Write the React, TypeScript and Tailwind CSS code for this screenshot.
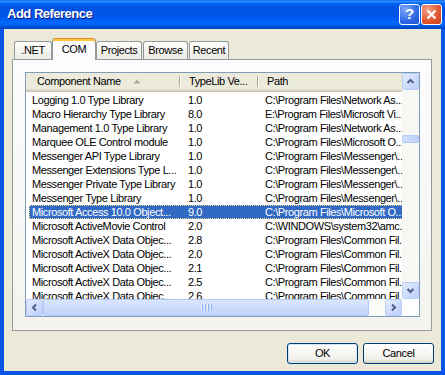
import React from "react";

const rows: [string, string, string][] = [
  ["Logging 1.0 Type Library", "1.0", "C:\\Program Files\\Network As..."],
  ["Macro Hierarchy Type Library", "8.0", "E:\\Program Files\\Microsoft Vi..."],
  ["Management 1.0 Type Library", "1.0", "C:\\Program Files\\Network As..."],
  ["Marquee OLE Control module", "1.0", "C:\\Program Files\\Microsoft O..."],
  ["Messenger API Type Library", "1.0", "C:\\Program Files\\Messenger\\..."],
  ["Messenger Extensions Type L...", "1.0", "C:\\Program Files\\Messenger\\..."],
  ["Messenger Private Type Library", "1.0", "C:\\Program Files\\Messenger\\..."],
  ["Messenger Type Library", "1.0", "C:\\Program Files\\Messenger\\..."],
  ["Microsoft Access 10.0 Object...", "9.0", "C:\\Program Files\\Microsoft O..."],
  ["Microsoft ActiveMovie Control", "2.0", "C:\\WINDOWS\\system32\\amc..."],
  ["Microsoft ActiveX Data Objec...", "2.8", "C:\\Program Files\\Common Fil..."],
  ["Microsoft ActiveX Data Objec...", "2.0", "C:\\Program Files\\Common Fil..."],
  ["Microsoft ActiveX Data Objec...", "2.1", "C:\\Program Files\\Common Fil..."],
  ["Microsoft ActiveX Data Objec...", "2.5", "C:\\Program Files\\Common Fil..."],
  ["Microsoft ActiveX Data Objec...", "2.6", "C:\\Program Files\\Common Fil..."],
];

const SELECTED = 8;

function Chevron({ dir }: { dir: "up" | "down" | "left" | "right" }) {
  const d = {
    up: "M1.5 6 L4.5 3 L7.5 6",
    down: "M1.5 3 L4.5 6 L7.5 3",
    left: "M6 1.5 L3 4.5 L6 7.5",
    right: "M3 1.5 L6 4.5 L3 7.5",
  }[dir];
  return (
    <svg width="9" height="9" viewBox="0 0 9 9">
      <path d={d} fill="none" stroke="#4d6185" strokeWidth="2" />
    </svg>
  );
}

function ScrollBtn({ dir }: { dir: "up" | "down" | "left" | "right" }) {
  return (
    <div className="flex h-[17px] w-[17px] shrink-0 items-center justify-center rounded-[2px] border border-[#b9cdf7] bg-[linear-gradient(135deg,#e3ecfe,#bccffb)]">
      <Chevron dir={dir} />
    </div>
  );
}

function Tab({ label, width, active, className = "" }: { label: string; width: string; active?: boolean; className?: string }) {
  if (active) {
    return (
      <div
        className={`relative z-10 -mb-px flex h-[22px] ${width} items-start justify-center rounded-t-[3px] border border-b-0 border-[#919b9c] border-t-[#e68b2c] bg-[#fcfcfe] pt-[2px] shadow-[inset_0_2px_#ffc83c] ${className}`}
      >
        {label}
      </div>
    );
  }
  return (
    <div
      className={`flex h-[18px] ${width} items-center justify-center rounded-t-[3px] border border-b-0 border-[#919b9c] bg-[linear-gradient(to_bottom,#ffffff,#f3f2ee_60%,#ecebe6)] ${className}`}
    >
      {label}
    </div>
  );
}

export default function App() {
  return (
    <div className="flex h-[375px] w-[445px] flex-col bg-[#0855e6] font-['Liberation_Sans',Arial,sans-serif] text-[11px] tracking-[-0.4px] text-black">
      {/* title bar */}
      <div className="flex h-[29px] shrink-0 items-center bg-[linear-gradient(to_bottom,#0058ee_0%,#3a93ff_4%,#288eff_6%,#127dff_8%,#036ffc_10%,#0262ee_14%,#0057e5_20%,#0054e3_24%,#0055eb_56%,#005bf5_66%,#026afe_76%,#0062ef_86%,#0052d6_92%,#0046c0_100%)] pl-[7px] pr-[3px]">
        <span className="flex-1 pb-[1px] text-[13px] font-bold tracking-[-0.5px] text-white [text-shadow:1px_1px_#0a1883]">
          Add Reference
        </span>
        <div className="flex h-[21px] w-[21px] items-center justify-center rounded-[3px] border border-white bg-[radial-gradient(circle_at_30%_25%,#7fa8f8,#2d68e3_60%,#1e51cf)] text-[15px] font-bold text-white">
          ?
        </div>
        <div className="ml-[1px] flex h-[21px] w-[21px] items-center justify-center rounded-[3px] border border-white bg-[radial-gradient(circle_at_30%_25%,#f5a48a,#e0552f_60%,#c8421d)]">
          <svg width="11" height="11" viewBox="0 0 11 11">
            <path d="M1.5 1.5 L9.5 9.5 M9.5 1.5 L1.5 9.5" stroke="#fff" strokeWidth="2.2" />
          </svg>
        </div>
      </div>

      {/* client area */}
      <div className="mx-[4px] mb-[4px] flex flex-1 flex-col bg-[#ece9d8]">
        <div className="ml-[8px] mr-[9px] mt-[9px]">
          {/* tabs */}
          <div className="flex items-end pl-[2px]">
            <Tab label=".NET" width="w-[38px]" />
            <Tab label="COM" width="w-[44px]" active />
            <Tab label="Projects" width="w-[46px]" />
            <Tab label="Browse" width="w-[45px]" className="ml-[1px]" />
            <Tab label="Recent" width="w-[40px]" className="ml-[1px]" />
          </div>

          {/* tab panel */}
          <div className="h-[272px] border border-[#919b9c] bg-[linear-gradient(to_bottom,#fcfcfe,#f4f3ee)] pl-[12px] pt-[12px]">
            {/* list view */}
            <div className="flex h-[245px] w-[395px] flex-col border border-[#7f9db9] bg-white">
              <div className="flex h-[226px]">
                <div className="w-[376px] overflow-hidden">
                  {/* header */}
                  <div className="flex h-[19px] bg-[#ebeadb] shadow-[inset_0_-1px_#cbc7b8,inset_0_-2px_#d6d2c2,inset_0_-3px_#e2decd]">
                    <div className="flex w-[155px] shrink-0 items-center pb-[2px] pl-[11px]">
                      <span>Component Name</span>
                      <svg className="ml-[12px]" width="8" height="5" viewBox="0 0 8 5">
                        <path d="M0.5 4.5 L4 0.5 L7.5 4.5 Z" fill="#aca899" />
                      </svg>
                      <span className="ml-auto h-[11px] w-px bg-[#aca899]" />
                      <span className="h-[11px] w-px bg-white" />
                    </div>
                    <div className="flex w-[78px] shrink-0 items-center pb-[2px] pl-[8px]">
                      <span className="whitespace-nowrap">TypeLib Ve...</span>
                      <span className="ml-auto h-[11px] w-px bg-[#aca899]" />
                      <span className="h-[11px] w-px bg-white" />
                    </div>
                    <div className="flex flex-1 items-center pb-[2px] pl-[8px]">Path</div>
                  </div>
                  {/* rows */}
                  <div className="h-[207px] overflow-hidden pt-[1px]">
                    {rows.map(([name, ver, path], i) => (
                      <div
                        key={i}
                        className={`ml-[3px] flex h-[14px] w-[400px] items-center whitespace-nowrap ${
                          i === SELECTED
                            ? "bg-[#316ac5] text-white outline-1 -outline-offset-1 outline-dotted outline-[#f3d38a]"
                            : ""
                        }`}
                      >
                        <span className="w-[152px] shrink-0 overflow-hidden pl-[3px]">{name}</span>
                        <span className="w-[78px] shrink-0 pl-[7px]">{ver}</span>
                        <span className="pl-[6px]">{path}</span>
                      </div>
                    ))}
                  </div>
                </div>
                {/* vertical scrollbar */}
                <div className="flex w-[17px] flex-col bg-[#f7f7f3]">
                  <ScrollBtn dir="up" />
                  <div className="flex-1">
                    <div className="mt-[45px] h-[8px] rounded-[2px] border border-[#b4c8f6] bg-[linear-gradient(to_right,#d5e2fd,#bdd0fb)]" />
                  </div>
                  <ScrollBtn dir="down" />
                </div>
              </div>
              {/* horizontal scrollbar */}
              <div className="flex h-[17px]">
                <div className="flex w-[376px] bg-[#fbfbf8]">
                  <ScrollBtn dir="left" />
                  <div className="flex h-[17px] w-[326px] items-center justify-center gap-[1px] rounded-[2px] border border-[#b4c8f6] bg-[linear-gradient(to_bottom,#dbe6fe,#c0d3fb)]">
                    {[0, 1, 2, 3].map((k) => (
                      <span key={k} className="flex h-[7px]">
                        <span className="w-px bg-[#eef3fe]" />
                        <span className="w-px bg-[#8cb0f8]" />
                      </span>
                    ))}
                  </div>
                  <div className="flex-1" />
                  <ScrollBtn dir="right" />
                </div>
                <div className="flex-1 bg-white" />
              </div>
            </div>
          </div>
        </div>

        {/* buttons */}
        <div className="mt-[12px] flex justify-end gap-[5px] pr-[7px]">
          <button className="h-[21px] w-[71px] rounded-[3px] border border-[#003c74] bg-[linear-gradient(to_bottom,#ffffff,#f0efea_80%,#d6d0c5)] shadow-[inset_0_0_0_1px_#cee7ff]">
            OK
          </button>
          <button className="h-[21px] w-[71px] rounded-[3px] border border-[#003c74] bg-[linear-gradient(to_bottom,#ffffff,#f0efea_80%,#d6d0c5)]">
            Cancel
          </button>
        </div>
      </div>
    </div>
  );
}
